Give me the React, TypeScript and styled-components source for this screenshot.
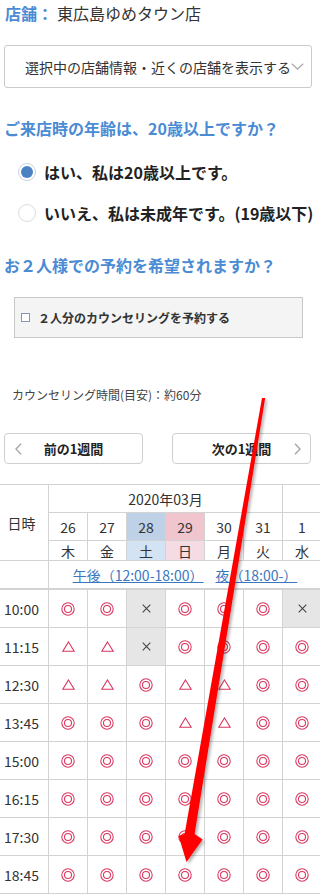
import React from 'react';
import styled, { createGlobalStyle } from 'styled-components';

const Global = createGlobalStyle`
  html, body { margin: 0; padding: 0; background: #fff; }
  body { font-family: "Noto Sans CJK JP", "Noto Sans", sans-serif; color: #333; }
  * { box-sizing: border-box; }
`;

const BLUE = '#4a8bd4';
const MARK = '#d9365e';
const LINE = '#d3d3d3';

const Page = styled.div`
  position: relative;
  width: 320px;
  height: 896px;
  overflow: hidden;
  background: #fff;
`;

const StoreLine = styled.div`
  height: 26px;
  line-height: 26px;
  padding-left: 5px;
  font-size: 16px;
  white-space: nowrap;
`;

const StoreLabel = styled.span`
  color: ${BLUE};
  font-weight: bold;
  margin-right: 4px;
`;

const StoreName = styled.span`
  color: #333;
`;

const SelectBox = styled.div`
  margin: 19px 0 0 4px;
  width: 308px;
  height: 43px;
  border: 1px solid #cbcbcb;
  border-radius: 3px;
  display: flex;
  align-items: center;
  padding-left: 20px;
  font-size: 14px;
  color: #333;
  white-space: nowrap;
`;

const Heading = styled.div<{ $top: number }>`
  margin-top: ${(p) => p.$top}px;
  padding-left: 4px;
  height: 24px;
  line-height: 24px;
  font-size: 16px;
  font-weight: bold;
  color: ${BLUE};
  white-space: nowrap;
`;

const RadioList = styled.div`
  margin-top: 11px;
  display: flex;
  flex-direction: column;
`;

const RadioRow = styled.label`
  height: 41px;
  display: flex;
  align-items: center;
  padding-left: 18px;
  gap: 8px;
  white-space: nowrap;
`;

const RadioDot = styled.span<{ $on?: boolean }>`
  flex: none;
  width: 18px;
  height: 18px;
  border-radius: 50%;
  border: 1px solid ${(p) => (p.$on ? '#c9d3df' : '#dcdcdc')};
  background: #fff;
  display: flex;
  align-items: center;
  justify-content: center;
  &::after {
    content: '';
    width: 12px;
    height: 12px;
    border-radius: 50%;
    background: ${(p) => (p.$on ? '#4b82c4' : 'transparent')};
  }
`;

const RadioText = styled.span`
  font-size: 16px;
  font-weight: bold;
  color: #222;
`;

const CheckPanel = styled.div`
  margin: 20px 0 0 14px;
  width: 289px;
  height: 41px;
  background: #f4f4f4;
  border: 1px solid #c8c8c8;
  display: flex;
  align-items: center;
  padding-left: 6px;
  gap: 8px;
`;

const CheckSquare = styled.span`
  flex: none;
  width: 9px;
  height: 9px;
  border: 1px solid #8496b6;
  background: #fff;
`;

const CheckText = styled.span`
  font-size: 12px;
  font-weight: bold;
  color: #333;
  white-space: nowrap;
`;

const Duration = styled.div`
  margin-top: 47px;
  padding-left: 12px;
  height: 20px;
  line-height: 20px;
  font-size: 12px;
  color: #444;
  white-space: nowrap;
`;

const NavBar = styled.div`
  margin-top: 28px;
  padding-left: 4px;
  display: flex;
  gap: 29px;
`;

const NavButton = styled.div`
  width: 139px;
  height: 31px;
  border: 1px solid #cfcfcf;
  border-radius: 4px;
  background: #fff;
  display: grid;
  grid-template-columns: 26px 1fr 26px;
  align-items: center;
  font-size: 13px;
  font-weight: bold;
  color: #222;
`;

const NavLabel = styled.span`
  grid-column: 2;
  text-align: center;
  white-space: nowrap;
`;

const NavIcon = styled.span<{ $side: 'left' | 'right' }>`
  grid-column: ${(p) => (p.$side === 'left' ? 1 : 3)};
  grid-row: 1;
  display: flex;
  justify-content: center;
  align-items: center;
`;

const TableWrap = styled.div`
  margin-top: 20px;
  width: 320px;
  overflow: hidden;
`;

const HeadGrid = styled.div`
  display: grid;
  grid-template-columns: 48px repeat(7, 38px);
  grid-template-rows: 27px 27px 19px 27px;
  gap: 1px;
  padding-top: 1px;
  width: 321px;
  background: ${LINE};
`;

const BodyGrid = styled.div`
  display: grid;
  grid-template-columns: 48px repeat(7, 38px);
  grid-auto-rows: 37px;
  gap: 1px;
  padding-top: 2px;
  padding-bottom: 1px;
  width: 321px;
  background: ${LINE};
`;

const Cell = styled.div<{ $bg?: string }>`
  background: ${(p) => p.$bg || '#fff'};
  display: flex;
  align-items: center;
  justify-content: center;
  font-size: 14px;
  color: #333;
  white-space: nowrap;
`;

const SideCell = styled(Cell)<{ $span?: number }>`
  grid-column: 1;
  grid-row: ${(p) => (p.$span ? `span ${p.$span}` : 'auto')};
  padding-right: 5px;
`;

const MonthCell = styled(Cell)`
  grid-column: 2 / span 6;
`;

const LinkCell = styled(Cell)`
  grid-column: 2 / span 7;
  gap: 12px;
`;

const PeriodLink = styled.a`
  color: #3a77bf;
  text-decoration: underline;
  font-size: 14px;
`;

const ArrowLayer = styled.svg`
  position: absolute;
  left: 0;
  top: 0;
  pointer-events: none;
`;

const Chevron = ({ dir }: { dir: 'left' | 'right' | 'down' }) => {
  if (dir === 'down')
    return (
      <svg width="13" height="7" viewBox="0 0 13 7">
        <polyline points="0.8,0.8 6.5,6 12.2,0.8" fill="none" stroke="#b0b0b0" strokeWidth="1.5" />
      </svg>
    );
  const pts = dir === 'left' ? '6,0.8 1,6 6,11.2' : '1,0.8 6,6 1,11.2';
  return (
    <svg width="7" height="12" viewBox="0 0 7 12">
      <polyline points={pts} fill="none" stroke="#aaa" strokeWidth="1.5" />
    </svg>
  );
};

type Kind = 'o' | 't' | 'x';

const Mark = ({ kind }: { kind: Kind }) => {
  if (kind === 'o')
    return (
      <svg width="14" height="14" viewBox="0 0 14 14">
        <circle cx="7" cy="7" r="6.2" fill="none" stroke={MARK} strokeWidth="1.05" />
        <circle cx="7" cy="7" r="3.5" fill="none" stroke={MARK} strokeWidth="1.05" />
      </svg>
    );
  if (kind === 't')
    return (
      <svg width="13" height="11" viewBox="0 0 13 11">
        <polygon points="6.5,0.9 12.2,10.3 0.8,10.3" fill="none" stroke={MARK} strokeWidth="1.05" strokeLinejoin="miter" />
      </svg>
    );
  return (
    <svg width="9" height="9" viewBox="0 0 9 9">
      <path d="M0.7 0.7 L8.3 8.3 M8.3 0.7 L0.7 8.3" stroke="#444" strokeWidth="1.1" />
    </svg>
  );
};

const days = [
  { d: '26', w: '木', tone: '' },
  { d: '27', w: '金', tone: '' },
  { d: '28', w: '土', tone: 'sat' },
  { d: '29', w: '日', tone: 'sun' },
  { d: '30', w: '月', tone: '' },
  { d: '31', w: '火', tone: '' },
  { d: '1', w: '水', tone: '' },
];

const dateBg = (tone: string) => (tone === 'sat' ? '#bed1e7' : tone === 'sun' ? '#f1c5cd' : '#fff');
const weekBg = (tone: string) => (tone === 'sat' ? '#d4e3f3' : tone === 'sun' ? '#f5dbe4' : '#fff');

const all: Kind[] = ['o', 'o', 'o', 'o', 'o', 'o', 'o'];
const slots: { t: string; m: Kind[] }[] = [
  { t: '10:00', m: ['o', 'o', 'x', 'o', 'o', 'o', 'x'] },
  { t: '11:15', m: ['t', 't', 'x', 'o', 'o', 'o', 'o'] },
  { t: '12:30', m: ['t', 't', 'o', 't', 't', 'o', 'o'] },
  { t: '13:45', m: ['o', 'o', 'o', 't', 't', 'o', 'o'] },
  { t: '15:00', m: all },
  { t: '16:15', m: all },
  { t: '17:30', m: all },
  { t: '18:45', m: all },
];

export default function App() {
  return (
    <Page>
      <Global />
      <StoreLine>
        <StoreLabel>店舗：</StoreLabel>
        <StoreName>東広島ゆめタウン店</StoreName>
      </StoreLine>
      <SelectBox>
        選択中の店舗情報・近くの店舗を表示する
        <Chevron dir="down" />
      </SelectBox>

      <Heading $top={28}>ご来店時の年齢は、20歳以上ですか？</Heading>
      <RadioList>
        <RadioRow>
          <RadioDot $on />
          <RadioText>はい、私は20歳以上です。</RadioText>
        </RadioRow>
        <RadioRow>
          <RadioDot />
          <RadioText>いいえ、私は未成年です。(19歳以下)</RadioText>
        </RadioRow>
      </RadioList>

      <Heading $top={20}>お２人様での予約を希望されますか？</Heading>
      <CheckPanel>
        <CheckSquare />
        <CheckText>２人分のカウンセリングを予約する</CheckText>
      </CheckPanel>

      <Duration>カウンセリング時間(目安)：約60分</Duration>

      <NavBar>
        <NavButton>
          <NavIcon $side="left">
            <Chevron dir="left" />
          </NavIcon>
          <NavLabel>前の1週間</NavLabel>
        </NavButton>
        <NavButton>
          <NavLabel>次の1週間</NavLabel>
          <NavIcon $side="right">
            <Chevron dir="right" />
          </NavIcon>
        </NavButton>
      </NavBar>

      <TableWrap>
        <HeadGrid>
          <SideCell $span={3}>日時</SideCell>
          <MonthCell>2020年03月</MonthCell>
          <Cell />
          {days.map((x) => (
            <Cell key={'d' + x.d} $bg={dateBg(x.tone)}>
              {x.d}
            </Cell>
          ))}
          {days.map((x) => (
            <Cell key={'w' + x.d} $bg={weekBg(x.tone)}>
              {x.w}
            </Cell>
          ))}
          <SideCell />
          <LinkCell>
            <PeriodLink>午後（12:00-18:00）</PeriodLink>
            <PeriodLink>夜（18:00-）</PeriodLink>
          </LinkCell>
        </HeadGrid>
        <BodyGrid>
          {slots.map((s) => (
            <React.Fragment key={s.t}>
              <SideCell>{s.t}</SideCell>
              {s.m.map((k, i) => (
                <Cell key={i} $bg={k === 'x' ? '#e6e6e6' : '#fff'}>
                  <Mark kind={k} />
                </Cell>
              ))}
            </React.Fragment>
          ))}
        </BodyGrid>
      </TableWrap>

      <ArrowLayer width="320" height="896" viewBox="0 0 320 896">
        <defs>
          <filter id="arrowShadow" x="-20%" y="-5%" width="140%" height="110%">
            <feDropShadow dx="2" dy="2" stdDeviation="1.5" floodColor="#000" floodOpacity="0.3" />
          </filter>
        </defs>
        <polygon
          points="262,398 265.2,398 194.6,834 202.6,839.5 186.5,862 178.6,835.8 184.6,834"
          fill="#ff0000"
          filter="url(#arrowShadow)"
        />
      </ArrowLayer>
    </Page>
  );
}
